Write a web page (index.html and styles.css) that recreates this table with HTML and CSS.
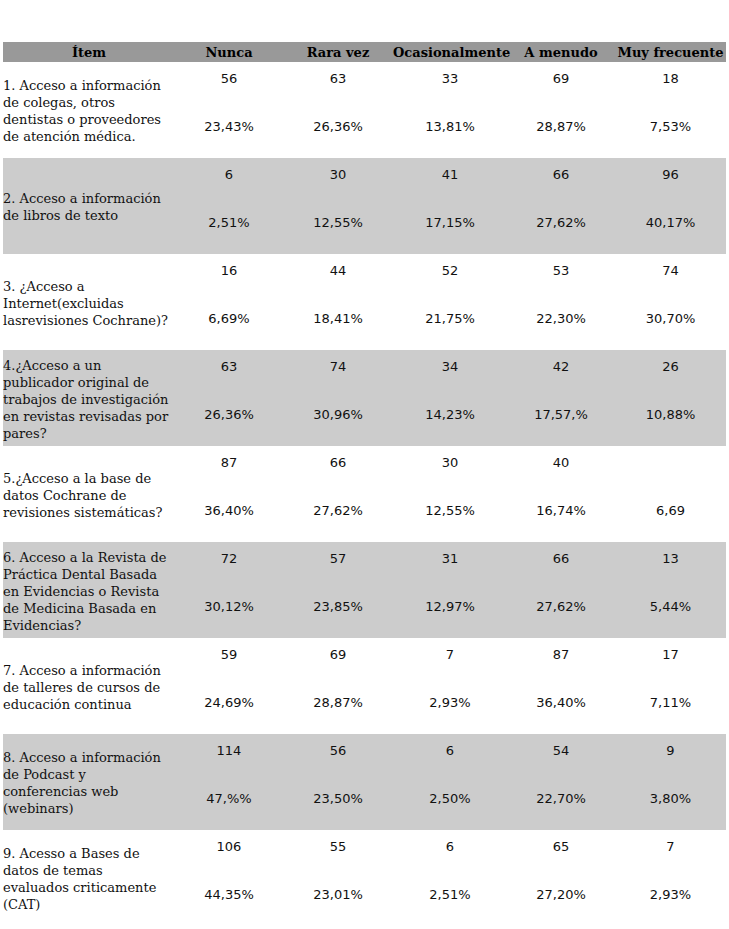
FILE: index.html
```html
<!DOCTYPE html>
<html lang="es">
<head>
<meta charset="utf-8">
<title>Tabla</title>
<link rel="stylesheet" href="styles.css">
</head>
<body>
<table class="survey">
  <colgroup>
    <col class="c-item"><col class="c-n1"><col class="c-n2"><col class="c-n3"><col class="c-n4"><col class="c-n5">
  </colgroup>
  <thead>
    <tr class="head">
      <th>Ítem</th><th>Nunca</th><th>Rara vez</th><th>Ocasionalmente</th><th>A menudo</th><th>Muy frecuente</th>
    </tr>
  </thead>
  <tbody>
    <tr>
      <td class="item">1. Acceso a información<br>de colegas, otros<br>dentistas o proveedores<br>de atención médica.</td>
      <td class="num"><div class="n">56</div><div class="p">23,43%</div></td>
      <td class="num"><div class="n">63</div><div class="p">26,36%</div></td>
      <td class="num"><div class="n">33</div><div class="p">13,81%</div></td>
      <td class="num"><div class="n">69</div><div class="p">28,87%</div></td>
      <td class="num"><div class="n">18</div><div class="p">7,53%</div></td>
    </tr>
    <tr class="alt">
      <td class="item">2. Acceso a información<br>de libros de texto</td>
      <td class="num"><div class="n">6</div><div class="p">2,51%</div></td>
      <td class="num"><div class="n">30</div><div class="p">12,55%</div></td>
      <td class="num"><div class="n">41</div><div class="p">17,15%</div></td>
      <td class="num"><div class="n">66</div><div class="p">27,62%</div></td>
      <td class="num"><div class="n">96</div><div class="p">40,17%</div></td>
    </tr>
    <tr>
      <td class="item">3. ¿Acceso a<br>Internet(excluidas<br>lasrevisiones Cochrane)?</td>
      <td class="num"><div class="n">16</div><div class="p">6,69%</div></td>
      <td class="num"><div class="n">44</div><div class="p">18,41%</div></td>
      <td class="num"><div class="n">52</div><div class="p">21,75%</div></td>
      <td class="num"><div class="n">53</div><div class="p">22,30%</div></td>
      <td class="num"><div class="n">74</div><div class="p">30,70%</div></td>
    </tr>
    <tr class="alt">
      <td class="item">4.¿Acceso a un<br>publicador original de<br>trabajos de investigación<br>en revistas revisadas por<br>pares?</td>
      <td class="num"><div class="n">63</div><div class="p">26,36%</div></td>
      <td class="num"><div class="n">74</div><div class="p">30,96%</div></td>
      <td class="num"><div class="n">34</div><div class="p">14,23%</div></td>
      <td class="num"><div class="n">42</div><div class="p">17,57,%</div></td>
      <td class="num"><div class="n">26</div><div class="p">10,88%</div></td>
    </tr>
    <tr>
      <td class="item">5.¿Acceso a la base de<br>datos Cochrane de<br>revisiones sistemáticas?</td>
      <td class="num"><div class="n">87</div><div class="p">36,40%</div></td>
      <td class="num"><div class="n">66</div><div class="p">27,62%</div></td>
      <td class="num"><div class="n">30</div><div class="p">12,55%</div></td>
      <td class="num"><div class="n">40</div><div class="p">16,74%</div></td>
      <td class="num"><div class="n"></div><div class="p">6,69</div></td>
    </tr>
    <tr class="alt">
      <td class="item">6. Acceso a la Revista de<br>Práctica Dental Basada<br>en Evidencias o Revista<br>de Medicina Basada en<br>Evidencias?</td>
      <td class="num"><div class="n">72</div><div class="p">30,12%</div></td>
      <td class="num"><div class="n">57</div><div class="p">23,85%</div></td>
      <td class="num"><div class="n">31</div><div class="p">12,97%</div></td>
      <td class="num"><div class="n">66</div><div class="p">27,62%</div></td>
      <td class="num"><div class="n">13</div><div class="p">5,44%</div></td>
    </tr>
    <tr>
      <td class="item">7. Acceso a información<br>de talleres de cursos de<br>educación continua</td>
      <td class="num"><div class="n">59</div><div class="p">24,69%</div></td>
      <td class="num"><div class="n">69</div><div class="p">28,87%</div></td>
      <td class="num"><div class="n">7</div><div class="p">2,93%</div></td>
      <td class="num"><div class="n">87</div><div class="p">36,40%</div></td>
      <td class="num"><div class="n">17</div><div class="p">7,11%</div></td>
    </tr>
    <tr class="alt">
      <td class="item">8. Acceso a información<br>de Podcast y<br>conferencias web<br>(webinars)</td>
      <td class="num"><div class="n">114</div><div class="p">47,%%</div></td>
      <td class="num"><div class="n">56</div><div class="p">23,50%</div></td>
      <td class="num"><div class="n">6</div><div class="p">2,50%</div></td>
      <td class="num"><div class="n">54</div><div class="p">22,70%</div></td>
      <td class="num"><div class="n">9</div><div class="p">3,80%</div></td>
    </tr>
    <tr>
      <td class="item">9. Acesso a Bases de<br>datos de temas<br>evaluados criticamente<br>(CAT)</td>
      <td class="num"><div class="n">106</div><div class="p">44,35%</div></td>
      <td class="num"><div class="n">55</div><div class="p">23,01%</div></td>
      <td class="num"><div class="n">6</div><div class="p">2,51%</div></td>
      <td class="num"><div class="n">65</div><div class="p">27,20%</div></td>
      <td class="num"><div class="n">7</div><div class="p">2,93%</div></td>
    </tr>
  </tbody>
</table>
</body>
</html>
```

FILE: styles.css
```css
html, body {
  margin: 0;
  padding: 0;
  background: #ffffff;
}

body {
  padding: 42px 0 0 3px;
  color: #000000;
  font-family: "DejaVu Serif", serif;
}

.survey {
  border-collapse: collapse;
  border-spacing: 0;
  table-layout: fixed;
  width: 723px;
}

.c-item { width: 172px; }
.c-n1 { width: 108px; }
.c-n2 { width: 110px; }
.c-n3 { width: 114px; }
.c-n4 { width: 108px; }
.c-n5 { width: 111px; }

.survey th,
.survey td {
  padding: 0;
}

.survey .head th {
  background: #999999;
  font-family: "DejaVu Serif", serif;
  font-weight: bold;
  font-size: 13px;
  line-height: 19px;
  padding-top: 1px;
  text-align: center;
  white-space: nowrap;
}

.survey tbody tr {
  height: 96px;
}

.survey tbody tr.alt {
  background: #cccccc;
}

.survey td.item {
  vertical-align: middle;
  font-family: "DejaVu Serif", serif;
  font-size: 13px;
  line-height: 17px;
  padding-top: 2px;
  white-space: nowrap;
  color: #111111;
}

.survey td.num {
  vertical-align: top;
  text-align: center;
  font-family: "DejaVu Sans", sans-serif;
  font-size: 13px;
  padding-top: 9px;
  color: #111111;
}

.num .n,
.num .p {
  height: 16px;
  line-height: 16px;
}

.num .p {
  margin-top: 32px;
}
```
